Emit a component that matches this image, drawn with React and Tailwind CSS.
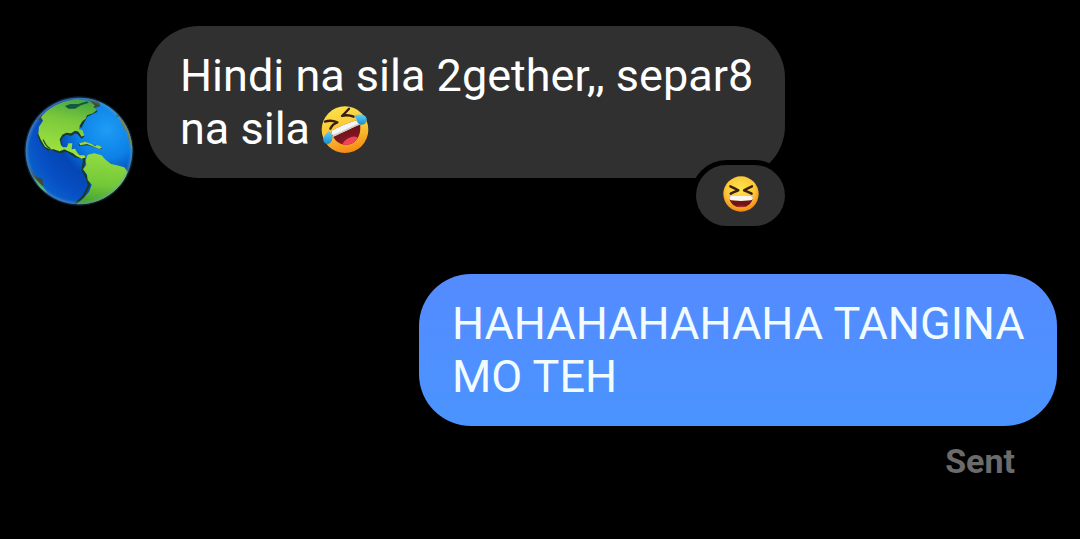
import React from 'react';

const GlobeAvatar = () => (
    <svg viewBox="27 30 330 330" role="img" aria-label="Globe" className="w-[110px] h-[110px] shrink-0">
        <defs>
            <radialGradient id="sea" cx="0.76" cy="0.3" r="0.85">
                <stop offset="0" stopColor="#1e9df5" />
                <stop offset="0.32" stopColor="#0c80e6" />
                <stop offset="0.55" stopColor="#0446b4" />
                <stop offset="0.78" stopColor="#074fc4" />
                <stop offset="1" stopColor="#0a66cf" />
            </radialGradient>
            <linearGradient id="north" x1="0.6" y1="0" x2="0.4" y2="1">
                <stop offset="0" stopColor="#46a83e" />
                <stop offset="0.35" stopColor="#7cc83c" />
                <stop offset="1" stopColor="#a2e840" />
            </linearGradient>
            <linearGradient id="south" x1="0.5" y1="0" x2="0.4" y2="1">
                <stop offset="0" stopColor="#94dc42" />
                <stop offset="0.6" stopColor="#72c838" />
                <stop offset="1" stopColor="#3f9c30" />
            </linearGradient>
            <radialGradient id="rim" cx="0.5" cy="0.5" r="0.5">
                <stop offset="0.93" stopColor="#6fa8c4" stopOpacity="0" />
                <stop offset="1" stopColor="#7f9ca8" stopOpacity="0.5" />
            </radialGradient>
            <clipPath id="disc"><circle cx="192" cy="195" r="160" /></clipPath>
        </defs>
        <circle cx="192" cy="195" r="164" fill="#173a50" opacity="0.6" />
        <circle cx="192" cy="195" r="160" fill="url(#sea)" />
        <g clipPath="url(#disc)">
            {/* shaded coast */}
            <g fill="none" stroke="#1c3a2c" strokeWidth="7" strokeLinejoin="round">
                <path d="M70 144 78 166 90 184 104 192M112 190 134 198 156 194 180 210 206 216" />
                <path d="M208 216 203 252 216 278 222 298 206 330 180 356" />
                <path d="M206 148 200 154 190 142 180 138 168 146 154 142 142 150 134 162 138 176M196 124 214 90 246 74" />
            </g>
            <path d="M218 42 252 46 256 60 240 66Z" fill="#3c4a38" />
            <path d="M40 240 60 270 82 280 84 300 68 300Z" fill="#48432b" />
            <path d="M56 274 72 290 84 302 98 322 74 306Z" fill="#3fbf54" />
            <path d="M278 58 306 78 304 92 320 94 322 118 338 140 342 164 352 190 362 180 340 100Z" fill="#3c5148" />
            <path d="M312 94 330 108 346 140 356 186 350 190 342 164 338 140 322 118Z" fill="#77762f" />
            <path d="M62 100 84 84 78 104Z" fill="#293d4a" />
            <path
                d="M84 86C112 58 146 44 186 40L224 46 240 58 234 64 246 72 234 82 216 88 212 98 202 106 194 118 192 130 202 132 208 148 200 152 190 136 180 134 168 142 154 140 142 146 134 160 138 178 144 184 156 184 160 172 172 172 170 190 180 188 188 202 194 208 208 208 212 214 200 218 184 210 174 202 160 196 148 190 134 196 116 190 104 190 90 182 78 162 70 144 72 122 84 104 78 94Z"
                fill="url(#north)"
            />
            <path d="M85 162C90 174 96 182 105 188" fill="none" stroke="#27552c" strokeWidth="4" strokeLinecap="round" />
            <path d="M150 60 166 54 190 54 216 46 222 50 198 58 180 68 160 68Z" fill="#14583e" />
            <path d="M190 172 210 168 232 176 246 178 262 184 258 190 238 184 218 178 192 180Z" fill="#20432d" />
            <path d="M192 172 210 167 230 174 240 180 246 177 262 183 254 189 238 183 216 174 196 178Z" fill="#94d84c" />
            <path
                d="M218 206 238 202 260 208 270 220 288 234 306 238 328 244 338 258 330 280 316 300 296 324 266 348 228 360 184 354 204 338 222 318 230 296 218 282 216 266 204 250 214 236 212 222Z"
                fill="url(#south)"
            />
        </g>
        <circle cx="192" cy="195" r="160" fill="url(#rim)" />
    </svg>
);

const RoflEmoji = () => (
    <svg viewBox="39 30 144 144" role="img" aria-label="Rolling on the floor laughing" className="inline-block w-12 h-12 align-[-9px]">
        <defs>
            <linearGradient id="roflFace" x1="0.35" y1="0" x2="0.6" y2="1">
                <stop offset="0" stopColor="#fde04a" />
                <stop offset="0.55" stopColor="#fbc432" />
                <stop offset="1" stopColor="#f48713" />
            </linearGradient>
            <linearGradient id="roflMouth" x1="0.3" y1="0" x2="0.6" y2="1">
                <stop offset="0" stopColor="#4d0b12" />
                <stop offset="1" stopColor="#951b24" />
            </linearGradient>
            <linearGradient id="tear" x1="0" y1="0" x2="0" y2="1">
                <stop offset="0" stopColor="#63d2fa" />
                <stop offset="1" stopColor="#168dd0" />
            </linearGradient>
            <clipPath id="roflMouthClip">
                <path d="M75 104C96 95 120 83 138 78C149 75 156 78 157 88C160 118 147 141 125 148C101 155 79 139 72 118C70 110 70 107 75 104Z" />
            </clipPath>
        </defs>
        <circle cx="111" cy="104" r="70" fill="url(#roflFace)" />
        <g clipPath="url(#roflMouthClip)">
            <rect x="65" y="65" width="100" height="90" fill="url(#roflMouth)" />
            <ellipse cx="127" cy="141" rx="25" ry="13" transform="rotate(-28 127 141)" fill="#ef4459" />
            <path d="M60 96 144 62 162 86C136 96 108 112 76 125Z" fill="#f7f5f3" />
            <path d="M76 125C108 112 136 96 162 86L160 82C134 92 106 108 74 120Z" fill="#cfcaca" />
        </g>
        <g fill="none" stroke="#38200f" strokeWidth="7" strokeLinecap="round" strokeLinejoin="round">
            <path d="M51 80C65 75 76 77 88 82C78 86 71 92 67 101" />
            <path d="M123 41C116 49 109 56 102 63C114 59 125 60 137 65" />
        </g>
        <path d="M62 107C74 118 75 127 72 136C69 145 59 150 51 145C43 138 46 128 51 121C55 116 59 112 62 107Z" fill="url(#tear)" />
        <path d="M137 61C151 58 162 56 171 63C179 70 177 81 169 87C160 92 150 88 147 79C145 72 143 67 137 61Z" fill="url(#tear)" />
    </svg>
);

const LaughEmoji = () => (
    <svg viewBox="112 78 108 108" role="img" aria-label="Laughing" className="w-9 h-9">
        <defs>
            <radialGradient id="laughFace" cx="0.48" cy="0.36" r="0.68">
                <stop offset="0" stopColor="#fee34d" />
                <stop offset="0.6" stopColor="#fcc636" />
                <stop offset="1" stopColor="#ef7b14" />
            </radialGradient>
            <clipPath id="laughMouthClip">
                <path d="M137 138H195C201 138 203 142 201 147C196 164 182 172 166 172C149 172 136 163 131 147C130 142 132 138 137 138Z" />
            </clipPath>
        </defs>
        <circle cx="166" cy="132" r="53" fill="url(#laughFace)" />
        <g clipPath="url(#laughMouthClip)">
            <rect x="128" y="135" width="76" height="40" fill="#701510" />
            <ellipse cx="166" cy="173" rx="24" ry="7" fill="#a82522" />
            <path d="M128 136H204V148C190 155 142 155 128 148Z" fill="#faf5ee" />
        </g>
        <g fill="none" stroke="#38200f" strokeWidth="7" strokeLinecap="round" strokeLinejoin="round">
            <path d="M134 109C143 113 151 117 158 121C150 124 143 127 135 131" />
            <path d="M199 109C190 113 182 117 175 121C183 124 190 127 198 131" />
        </g>
    </svg>
);

const Bubble = ({ className, children }) => (
    <p className={`max-w-[638px] rounded-[52px] pl-[33px] pr-7 py-[23px] text-[45px] leading-[53px] ${className}`}>
        {children}
    </p>
);

const App = () => {
    return (
        <main className="min-h-screen bg-black pt-[26px] pb-14 pl-6 pr-[23px] font-['Roboto',sans-serif]">
            {/* Received */}
            <div className="flex items-end gap-[13px]">
                <div className="mb-5 shrink-0">
                    <GlobeAvatar />
                </div>
                <div className="flex flex-col items-end">
                    <Bubble className="bg-[#303030] text-white">
                        Hindi na sila 2gether,, separ8 na sila <RoflEmoji />
                    </Bubble>
                    <button
                        type="button"
                        className="-mt-[13px] flex h-[61px] w-[89px] items-center justify-center rounded-full bg-[#303030] pb-[3px] ring-[5px] ring-black"
                    >
                        <LaughEmoji />
                    </button>
                </div>
            </div>

            {/* Sent */}
            <div className="mt-12 flex flex-col items-end">
                <Bubble className="bg-linear-to-b from-[#548bff] to-[#4a94ff] text-[#f2fcff]">
                    HAHAHAHAHAHA TANGINA MO TEH
                </Bubble>
                <span className="mt-[15px] mr-[42px] text-[34px] leading-10 font-bold text-[#6b6b6b]">Sent</span>
            </div>
        </main>
    );
};

export default App;
